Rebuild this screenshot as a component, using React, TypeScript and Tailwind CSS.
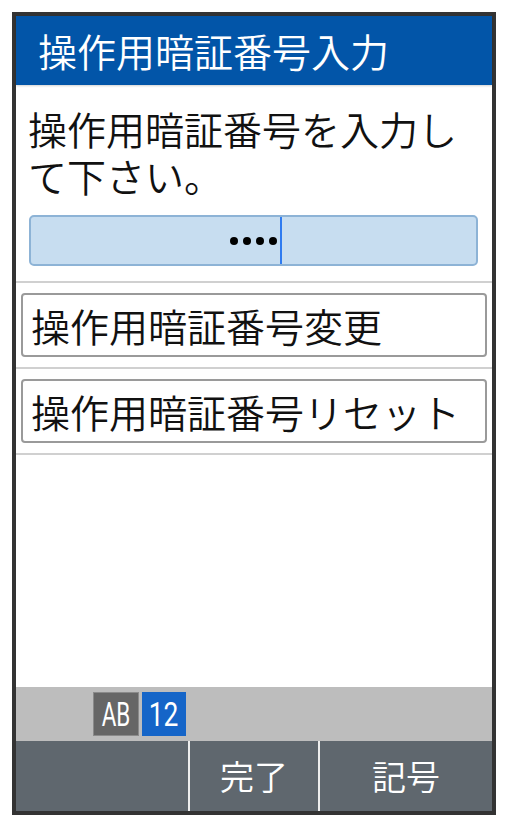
import React from "react";

const jp = { fontFamily: '"Noto Sans CJK JP", "Noto Sans", sans-serif' };

export default function App() {
  return (
    <div className="w-[507px] h-[826px] bg-white pt-[12px] pl-[12px]" style={jp}>
      <div className="w-[484px] h-[803px] border-[4px] border-[#333333] flex flex-col bg-white">
        <div className="h-[69px] bg-[#0255A8] flex items-center pl-[22px] text-white text-[39px] font-[350] leading-none relative z-10 shadow-[0_1px_2px_rgba(0,0,0,0.18)]">
          操作用暗証番号入力
        </div>
        <div className="flex-1 flex flex-col">
          <div className="pt-[20px] pl-[12px] text-[39px] font-[350] leading-[47px] text-[#111111]">
            <div>操作用暗証番号を入力し</div>
            <div>て下さい。</div>
          </div>
          <div className="mt-[16px] ml-[13px] mr-[14px] h-[51px] bg-[#C7DDF0] border-[2px] border-[#8DB3D6] rounded-[5px] flex justify-center items-stretch">
            <div className="flex items-center gap-[5px] pl-[4px]">
              <span className="w-[8px] h-[8px] rounded-full bg-black" />
              <span className="w-[8px] h-[8px] rounded-full bg-black" />
              <span className="w-[8px] h-[8px] rounded-full bg-black" />
              <span className="w-[8px] h-[8px] rounded-full bg-black" />
            </div>
            <div className="w-[2px] ml-[3px] bg-[#2F7BF0]" />
          </div>
          <div className="mt-[15px] h-[2px] bg-[#D0D0D0]" />
          <div className="py-[10px] px-[5px]">
            <div className="h-[64px] border-[2px] border-[#9A9A9A] rounded-[4px] flex items-center pl-[8px] text-[39px] font-[350] leading-none text-[#111111]">
              操作用暗証番号変更
            </div>
          </div>
          <div className="h-[2px] bg-[#D0D0D0]" />
          <div className="py-[10px] px-[5px]">
            <div className="h-[64px] border-[2px] border-[#9A9A9A] rounded-[4px] flex items-center pl-[8px] text-[39px] font-[350] leading-none text-[#111111]">
              操作用暗証番号リセット
            </div>
          </div>
          <div className="h-[2px] bg-[#D0D0D0]" />
        </div>
        <div className="h-[54px] bg-[#BDBDBD] flex items-center pl-[77px] gap-[3px]">
          <div
            className="w-[46px] h-[44px] bg-[#666666] border border-[#8a8a8a] flex items-center justify-center text-white text-[33px] leading-none"
            style={{ fontFamily: "Roboto, sans-serif" }}
          >
            <span className="inline-block scale-x-[0.68]">AB</span>
          </div>
          <div
            className="w-[44px] h-[44px] bg-[#1565C8] flex items-center justify-center text-white text-[33px] leading-none"
            style={{ fontFamily: "Roboto, sans-serif" }}
          >
            <span className="inline-block scale-x-[0.8]">12</span>
          </div>
        </div>
        <div className="h-[70px] bg-[#5F676E] flex text-white text-[34px] font-[350] leading-none">
          <div className="w-[172px]" />
          <div className="w-[2px] bg-[#EDEDED]" />
          <div className="w-[128px] flex items-center justify-center">完了</div>
          <div className="w-[2px] bg-[#EDEDED]" />
          <div className="flex-1 flex items-center justify-center">記号</div>
        </div>
      </div>
    </div>
  );
}
